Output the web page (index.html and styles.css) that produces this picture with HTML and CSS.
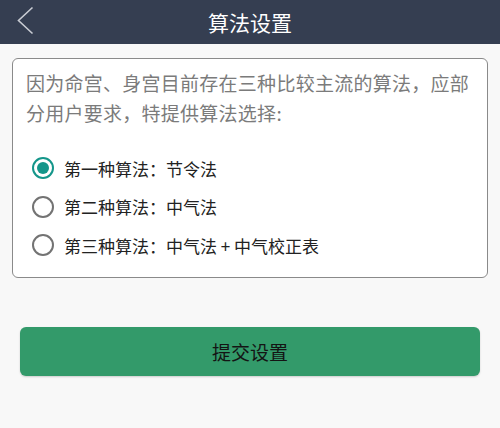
FILE: index.html
```html
<!DOCTYPE html>
<html lang="zh">
<head>
<meta charset="utf-8">
<title>算法设置</title>
<link rel="stylesheet" href="styles.css">
</head>
<body>
<header class="topbar">
  <button class="back" aria-label="返回">
    <svg width="18" height="30" viewBox="0 0 18 30"><polyline points="15.5,1.5 1.5,14.5 15.5,27.5" fill="none" stroke="#c9ccd3" stroke-width="1.6"/></svg>
  </button>
  <h1 class="title">算法设置</h1>
</header>
<main class="content">
  <section class="card">
    <p class="intro">因为命宫、身宫目前存在三种比较主流的算法，应部分用户要求，特提供算法选择:</p>
    <div class="options">
      <label class="option"><span class="radio checked"></span><span>第一种算法：节令法</span></label>
      <label class="option"><span class="radio"></span><span>第二种算法：中气法</span></label>
      <label class="option"><span class="radio"></span><span>第三种算法：中气法 + 中气校正表</span></label>
    </div>
  </section>
  <button class="submit">提交设置</button>
</main>
</body>
</html>
```
FILE: styles.css
```css
* { box-sizing: border-box; }
html, body { margin: 0; padding: 0; }
body {
  width: 500px;
  height: 428px;
  background: #f8f8f8;
  font-family: "Noto Sans CJK SC", "Noto Sans", sans-serif;
  overflow: hidden;
}
.topbar {
  position: relative;
  height: 44px;
  background: #353e51;
  display: flex;
  align-items: center;
  justify-content: center;
}
.back {
  position: absolute;
  left: 17px;
  top: 6px;
  width: 18px;
  height: 30px;
  padding: 0;
  border: 0;
  background: none;
  display: flex;
}
.title {
  margin: 0;
  font-size: 21px;
  font-weight: normal;
  color: #ffffff;
  line-height: 44px;
}
.content {
  padding: 14px 12px 0;
}
.card {
  background: #ffffff;
  border: 1px solid #8a8a8a;
  border-radius: 6px;
  padding: 9px 10px 12px 13px;
}
.intro {
  margin: 0;
  font-size: 19px;
  letter-spacing: 0.26px;
  line-height: 30px;
  color: #7b7b7b;
}
.options {
  margin-top: 21px;
  display: flex;
  flex-direction: column;
}
.option {
  display: flex;
  align-items: center;
  height: 38.5px;
  font-size: 17px;
  color: #222222;
  gap: 10px;
  padding-left: 6px;
}
.radio {
  width: 22px;
  height: 22px;
  border: 2px solid #737373;
  border-radius: 50%;
  display: flex;
  align-items: center;
  justify-content: center;
  flex: none;
}
.radio.checked {
  border-color: #14968a;
}
.radio.checked::after {
  content: "";
  width: 12px;
  height: 12px;
  border-radius: 50%;
  background: #14968a;
}
.submit {
  display: block;
  margin: 49px 8px 0;
  width: 460px;
  height: 49px;
  border: 0;
  border-radius: 6px;
  background: #339a6a;
  box-shadow: 0 1px 2px rgba(0,0,0,0.18);
  font-family: "Noto Sans CJK SC", "Noto Sans", sans-serif;
  font-size: 19px;
  color: #141414;
}
```
